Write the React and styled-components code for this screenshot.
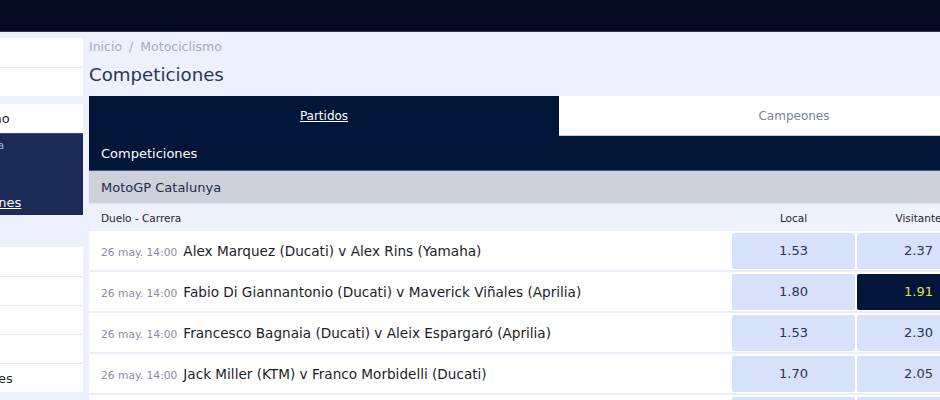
import React from "react";
import styled, { createGlobalStyle } from "styled-components";

const GlobalStyle = createGlobalStyle`
  html, body {
    margin: 0;
    padding: 0;
    background: #edf1fd;
    font-family: "DejaVu Sans", Verdana, sans-serif;
    overflow: hidden;
  }
`;

const TopBar = styled.header`
  height: 31px;
  background: #020a22;
  border-bottom: 1px solid #2c3552;
`;

const Layout = styled.div`
  display: flex;
  align-items: flex-start;
  margin-left: -87px;
  gap: 6px;
`;

const Sidebar = styled.aside`
  width: 170px;
  flex-shrink: 0;
  padding-top: 6px;
  display: flex;
  flex-direction: column;
`;

const SideGroup = styled.div`
  background: #ffffff;
  margin-bottom: ${(p) => p.$gap || 0}px;
`;

const SideItem = styled.div`
  display: flex;
  align-items: center;
  padding-left: 12px;
  font-size: 13px;
  color: #1d1f2b;
  white-space: nowrap;
  border-top: ${(p) => (p.$first ? "none" : "1px solid #e3e7f2")};
  height: ${(p) => (p.$first ? 29 : 28)}px;
`;

const SideDark = styled.div`
  background: #1b2b56;
  border-top: 1px solid #3b4a74;
  height: 82px;
  padding: 6px 0 5px 12px;
  display: flex;
  flex-direction: column;
  justify-content: space-between;
  box-sizing: border-box;
  margin-bottom: 32px;
`;

const SideSub = styled.div`
  font-size: 10px;
  color: #9fb0da;
  white-space: nowrap;
`;

const SideLink = styled.div`
  font-size: 13px;
  color: #ffffff;
  text-decoration: underline;
  white-space: nowrap;
`;

const Main = styled.main`
  width: 940px;
  flex-shrink: 0;
`;

const Crumbs = styled.div`
  margin-top: 7px;
  font-size: 12.5px;
  line-height: 16px;
  color: #a3aacb;
`;

const Sep = styled.span`
  margin: 0 7px;
`;

const Title = styled.h1`
  margin: 8px 0 0;
  font-size: 18.2px;
  font-weight: normal;
  line-height: 24px;
  color: #2a3558;
  height: 33px;
`;

const Tabs = styled.div`
  display: grid;
  grid-template-columns: 470px 1fr;
  height: 40px;
`;

const Tab = styled.div`
  display: flex;
  align-items: center;
  justify-content: center;
  font-size: 12px;
  background: ${(p) => (p.$active ? "#021639" : "#ffffff")};
  color: ${(p) => (p.$active ? "#ffffff" : "#7a829f")};
  text-decoration: ${(p) => (p.$active ? "underline" : "none")};
  border-bottom: ${(p) => (p.$active ? "none" : "1px solid #c7cbd8")};
  box-sizing: border-box;
`;

const SectionHead = styled.div`
  height: 34px;
  background: #021639;
  color: #ffffff;
  font-size: 13px;
  display: flex;
  align-items: center;
  padding-left: 12px;
  border-bottom: 1px solid #4c5677;
`;

const EventHead = styled.div`
  height: 32px;
  background: #cdd1da;
  color: #1f2a4d;
  font-size: 13px;
  display: flex;
  align-items: center;
  padding-left: 12px;
  border-bottom: 1px solid #e2e6f0;
`;

const Grid = styled.div`
  display: grid;
  grid-template-columns: 1fr 123px 123px;
  column-gap: 2px;
  padding-right: 49px;
  align-items: center;
`;

const ColHead = styled(Grid)`
  height: 27px;
  background: #eef2fc;
  font-size: 10.5px;
  color: #1f2233;
`;

const HeadCell = styled.div`
  text-align: ${(p) => (p.$center ? "center" : "left")};
  padding-left: ${(p) => (p.$center ? 0 : 12)}px;
`;

const Row = styled(Grid)`
  height: 39px;
  background: #ffffff;
  border-bottom: 2px solid #eaeefa;
`;

const Match = styled.div`
  display: flex;
  align-items: baseline;
  padding-left: 12px;
  white-space: nowrap;
`;

const When = styled.span`
  font-size: 10.7px;
  color: #878da5;
  margin-right: 6px;
`;

const Name = styled.span`
  font-size: 13.6px;
  color: #1b1c28;
`;

const Odd = styled.div`
  height: 36px;
  border-radius: 2px;
  display: flex;
  align-items: center;
  justify-content: center;
  font-size: 13px;
  background: ${(p) => (p.$selected ? "#021639" : "#d7e1fa")};
  color: ${(p) => (p.$selected ? "#e4e04c" : "#2b3352")};
`;

const matches = [
  { name: "Alex Marquez (Ducati) v Alex Rins (Yamaha)", local: "1.53", away: "2.37" },
  { name: "Fabio Di Giannantonio (Ducati) v Maverick Viñales (Aprilia)", local: "1.80", away: "1.91", sel: true },
  { name: "Francesco Bagnaia (Ducati) v Aleix Espargaró (Aprilia)", local: "1.53", away: "2.30" },
  { name: "Jack Miller (KTM) v Franco Morbidelli (Ducati)", local: "1.70", away: "2.05" },
  { name: "Jorge Martin (Ducati) v Brad Binder (KTM)", local: "1.62", away: "2.18" },
];

export default function App() {
  return (
    <>
      <GlobalStyle />
      <TopBar />
      <Layout>
        <Sidebar>
          <SideGroup $gap={8}>
            <SideItem $first>Inicio</SideItem>
            <SideItem>En directo</SideItem>
          </SideGroup>
          <SideGroup>
            <SideItem $first>Motociclismo</SideItem>
          </SideGroup>
          <SideDark>
            <SideSub>Próxima carrera</SideSub>
            <SideLink>Competiciones</SideLink>
          </SideDark>
          <SideGroup>
            <SideItem $first>Fútbol</SideItem>
            <SideItem>Tenis</SideItem>
            <SideItem>Baloncesto</SideItem>
            <SideItem>Fórmula 1</SideItem>
            <SideItem>Más deportes</SideItem>
          </SideGroup>
        </Sidebar>
        <Main>
          <Crumbs>
            Inicio<Sep>/</Sep>Motociclismo
          </Crumbs>
          <Title>Competiciones</Title>
          <Tabs>
            <Tab $active>Partidos</Tab>
            <Tab>Campeones</Tab>
          </Tabs>
          <SectionHead>Competiciones</SectionHead>
          <EventHead>MotoGP Catalunya</EventHead>
          <ColHead>
            <HeadCell>Duelo - Carrera</HeadCell>
            <HeadCell $center>Local</HeadCell>
            <HeadCell $center>Visitante</HeadCell>
          </ColHead>
          {matches.map((m, i) => (
            <Row key={i}>
              <Match>
                <When>26 may. 14:00</When>
                <Name>{m.name}</Name>
              </Match>
              <Odd>{m.local}</Odd>
              <Odd $selected={m.sel}>{m.away}</Odd>
            </Row>
          ))}
        </Main>
      </Layout>
    </>
  );
}
